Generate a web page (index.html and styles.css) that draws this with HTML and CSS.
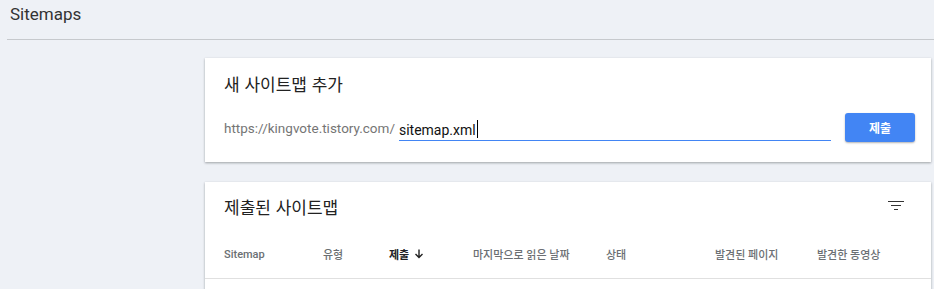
FILE: index.html
```html
<!DOCTYPE html>
<html lang="ko">
<head>
<meta charset="utf-8">
<link rel="stylesheet" href="styles.css">
</head>
<body>
<header class="top">
  <h1 class="top-title">Sitemaps</h1>
</header>
<main class="main">
  <section class="card add-card">
    <h2 class="card-title">새 사이트맵 추가</h2>
    <div class="add-row">
      <span class="prefix">https://kingvote.tistory.com/</span>
      <div class="input"><span class="input-text">sitemap.xml</span><span class="caret"></span></div>
      <button class="submit">제출</button>
    </div>
  </section>
  <section class="card list-card">
    <div class="list-head">
      <h2 class="card-title">제출된 사이트맵</h2>
      <svg class="filter" width="16" height="10" viewBox="0 0 16 10"><path d="M0 0.5h16M3 4.5h10M6 8.5h4" stroke="#333" stroke-width="1.2" fill="none"/></svg>
    </div>
    <div class="cols">
      <span class="col">Sitemap</span>
      <span class="col">유형</span>
      <span class="col col-active">제출 <svg class="arrow" width="10" height="10" viewBox="0 0 10 10"><path d="M5 0.5v8M1.5 5l3.5 3.5 3.5-3.5" stroke="#222" stroke-width="1.4" fill="none"/></svg></span>
      <span class="col">마지막으로 읽은 날짜</span>
      <span class="col">상태</span>
      <span class="col">발견된 페이지</span>
      <span class="col">발견한 동영상</span>
    </div>
  </section>
</main>
</body>
</html>
```

FILE: styles.css
```css
* { box-sizing: border-box; }
body {
  margin: 0;
  background: #eef1f6;
  font-family: Roboto, "Noto Sans CJK KR", sans-serif;
  color: #202124;
  overflow: hidden;
}
.top {
  margin-left: 7px;
  height: 40px;
  border-bottom: 1px solid #c6c9cd;
  padding: 3px 0 0 3px;
}
.top-title {
  margin: 0;
  font-size: 17px;
  font-weight: 400;
  color: #333;
  line-height: 22px;
}
.main {
  padding: 18px 3px 0 205px;
}
.card {
  background: #fff;
  box-shadow: 0 1px 2px rgba(60,64,67,.35), 0 1px 3px rgba(60,64,67,.12);
  padding: 0 19px;
}
.add-card {
  height: 104px;
  padding: 13px 16px 0 19px;
}
.card-title {
  margin: 0;
  font-family: "Noto Sans CJK KR", sans-serif;
  font-size: 17px;
  font-weight: 400;
  line-height: 26px;
  color: #222;
}
.add-row {
  display: flex;
  align-items: center;
  margin-top: 16px;
}
.prefix {
  font-size: 13.5px;
  color: #757575;
  margin-right: 4px;
  flex-shrink: 0;
}
.input {
  flex: 0 0 432px;
  height: 27px;
  border-bottom: 1px solid #4285f4;
  display: flex;
  align-items: flex-end;
  padding-bottom: 2px;
}
.input-text {
  font-size: 14px;
  color: #111;
}
.caret {
  width: 1px;
  height: 18px;
  background: #000;
  margin-left: 1px;
}
.submit {
  margin-left: 14px;
  flex: 0 0 70px;
  height: 29px;
  border: 0;
  border-radius: 3px;
  background: #4285f4;
  color: #fff;
  font-family: "Noto Sans CJK KR", sans-serif;
  font-size: 12px;
  font-weight: 700;
  box-shadow: 0 1px 2px rgba(0,0,0,.3);
  padding: 0;
}
.list-card {
  margin-top: 20px;
  height: 120px;
}
.list-head {
  display: flex;
  align-items: center;
  justify-content: space-between;
  height: 50px;
}
.filter { margin-right: 8px; margin-top: -2px; }
.cols {
  display: grid;
  grid-template-columns: 99px 66px 84px 133px 109px 102px 1fr;
  align-items: center;
  height: 47px;
  border-bottom: 1px solid #e0e0e0;
  margin: 0 -19px;
  padding: 0 19px 2px;
}
.col {
  font-size: 11px;
  font-weight: 500;
  color: #6b6f73;
  white-space: nowrap;
  display: flex;
  align-items: center;
  gap: 5px;
}
.col-active { color: #202124; font-weight: 700; }
.arrow { display: block; }
```
